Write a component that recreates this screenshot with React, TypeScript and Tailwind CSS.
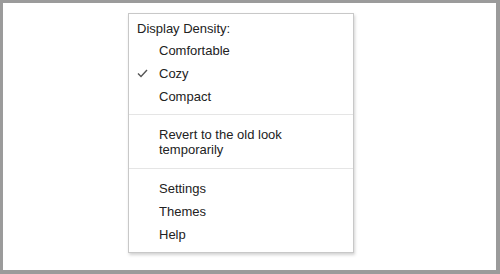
import React from 'react';

type Item = { label: string; checked?: boolean };

const densities: Item[] = [
  { label: 'Comfortable' },
  { label: 'Cozy', checked: true },
  { label: 'Compact' },
];

const links: Item[] = [{ label: 'Settings' }, { label: 'Themes' }, { label: 'Help' }];

function Check() {
  return (
    <svg width="11" height="9" viewBox="0 0 11 9" className="absolute left-[8px] top-[7px]">
      <polyline points="1,4.5 4,7.5 10,1" fill="none" stroke="#555" strokeWidth="1.4" />
    </svg>
  );
}

function Row({ item }: { item: Item }) {
  return (
    <div className="relative h-[23px] leading-[23px] pl-[30px]">
      {item.checked && <Check />}
      {item.label}
    </div>
  );
}

export default function App() {
  return (
    <div
      className="w-[500px] h-[274px] bg-white border-[#9b9b9b] border-t-[3px] border-l-[3px] border-r-[4px] border-b-[4px] flex items-start text-[13px] text-[#222]"
      style={{ fontFamily: '"Liberation Sans", Arial, sans-serif' }}
    >
      <div className="ml-[125px] mt-[10px] w-[226px] bg-white border border-[#c8c8c8] shadow-[1px_2px_3px_rgba(0,0,0,0.18)]">
        {/* Density options */}
        <div className="pt-[4px] pb-[6px]">
          <div className="h-[21px] leading-[21px] pl-[8px]">Display Density:</div>
          {densities.map((d) => (
            <Row key={d.label} item={d} />
          ))}
        </div>

        {/* Old look */}
        <div className="border-t border-[#e5e5e5] pt-[12px] pb-[11px] pl-[30px] pr-2 leading-[15px]">
          Revert to the old look
          <br />
          temporarily
        </div>

        {/* Links */}
        <div className="border-t border-[#e5e5e5] pt-[8px] pb-[6px]">
          {links.map((l) => (
            <Row key={l.label} item={l} />
          ))}
        </div>
      </div>
    </div>
  );
}
